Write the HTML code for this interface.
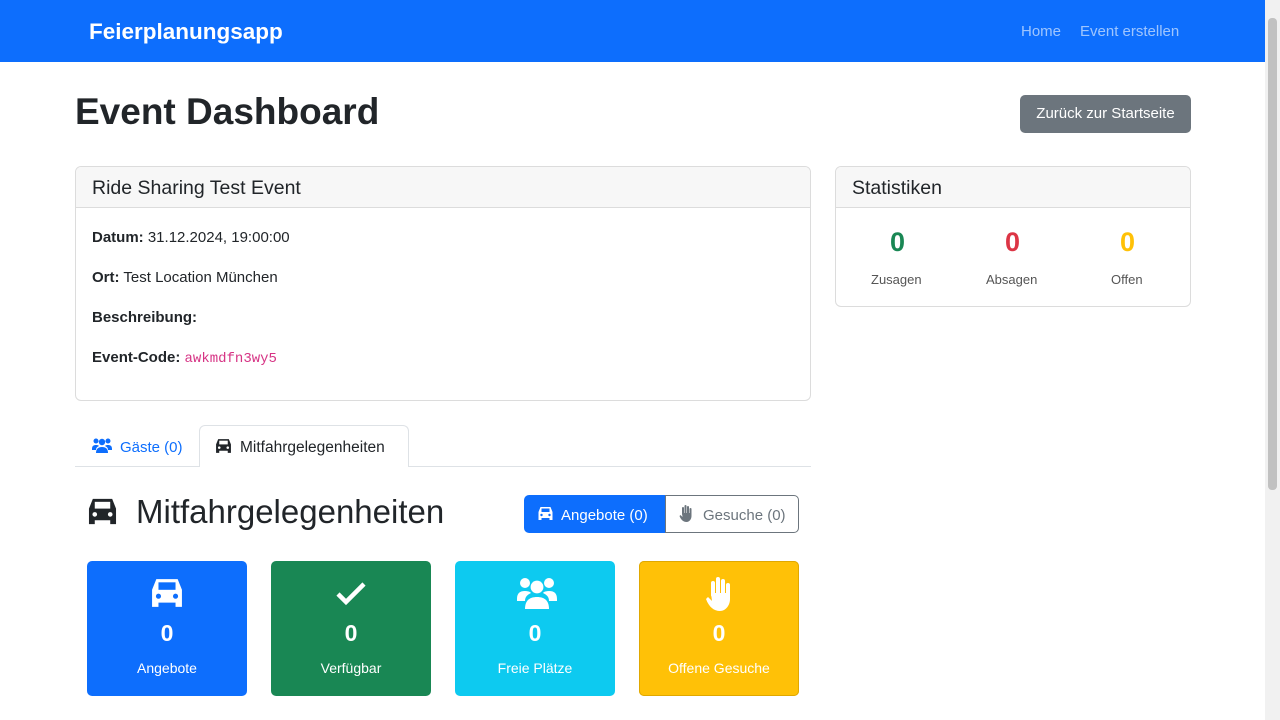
<!DOCTYPE html>
<html><head><meta charset="utf-8"><style>
*{box-sizing:border-box;margin:0;padding:0}
body{width:1280px;height:720px;overflow:hidden;background:#fff;font-family:"Liberation Sans",sans-serif;color:#212529;position:relative;font-size:15px}
.a{position:absolute}
.nav{left:0;top:0;width:1265px;height:62px;background:#0d6efd}
.sb{left:1265px;top:0;width:15px;height:720px;background:#f1f1f1}
.thumb{left:1268px;top:18px;width:9px;height:472px;background:#c1c1c1;border-radius:4px}
.card{border:1px solid #dcdcdc;border-radius:6px;background:#fff;overflow:hidden}
.ch{background:#f7f7f7;border-bottom:1px solid #dcdcdc;height:41px;padding:10px 16px;font-size:19.5px}
.tile{width:160px;height:135px;border-radius:5px;color:#fff;text-align:center}
.tile .n{position:absolute;left:0;right:0;top:59px;font-size:23px;font-weight:bold}
.tile .l{position:absolute;left:0;right:0;top:99px;font-size:14px}
.tile svg{position:absolute;left:62px;top:16px}
</style></head><body>
<div class="a nav"></div>
<div class="a" style="left:89px;top:19px;color:#fff;font-size:22.5px;font-weight:bold">Feierplanungsapp</div>
<div class="a" style="left:1021px;top:23px;color:rgba(255,255,255,.6);font-size:15px">Home</div>
<div class="a" style="left:1080px;top:23px;color:rgba(255,255,255,.6);font-size:15px">Event erstellen</div>
<div class="a sb"></div><div class="a thumb"></div>

<div class="a" style="left:75px;top:91px;font-size:37px;font-weight:bold">Event Dashboard</div>
<div class="a" style="left:1020px;top:95px;width:171px;height:38px;background:#6c757d;border-radius:5px;color:#fff;font-size:15px;line-height:38px;text-align:center">Zurück zur Startseite</div>

<div class="a card" style="left:75px;top:166px;width:736px;height:235px">
<div class="ch">Ride Sharing Test Event</div>
<div style="padding:20px 16px;line-height:20px">
<div><b>Datum:</b> 31.12.2024, 19:00:00</div>
<div style="margin-top:20px"><b>Ort:</b> Test Location München</div>
<div style="margin-top:20px"><b>Beschreibung:</b></div>
<div style="margin-top:20px"><b>Event-Code:</b> <span style="font-family:'Liberation Mono',monospace;color:#d63384;font-size:14px">awkmdfn3wy5</span></div>
</div></div>

<div class="a card" style="left:835px;top:166px;width:356px;height:141px">
<div class="ch">Statistiken</div></div>
<div class="a" style="left:835px;top:227px;width:356px;font-size:27px;font-weight:bold">
<span class="a" style="left:55px;color:#198754">0</span><span class="a" style="left:170px;color:#dc3545">0</span><span class="a" style="left:285px;color:#ffc107">0</span></div>
<div class="a" style="left:871px;top:272px;font-size:13px;color:#555">Zusagen</div>
<div class="a" style="left:986px;top:272px;font-size:13px;color:#555">Absagen</div>
<div class="a" style="left:1111px;top:272px;font-size:13px;color:#555">Offen</div>

<div class="a" style="left:75px;top:466px;width:736px;height:1px;background:#dee2e6"></div>
<div class="a" style="left:199px;top:425px;width:210px;height:42px;border:1px solid #dee2e6;border-bottom:none;border-radius:6px 6px 0 0;background:#fff"></div>
<svg class="a" style="left:92px;top:438px" width="20" height="16" viewBox="0 0 20 16" fill="#0d6efd"><circle cx="4" cy="3" r="2.5"/><circle cx="16" cy="3" r="2.5"/><circle cx="10" cy="4" r="3.2"/><path d="M0 11c0-3 1.5-4 4-4s3 1 3 1c-2 1-3 2-3 4H0zM20 11c0-3-1.5-4-4-4s-3 1-3 1c2 1 3 2 3 4h4zM4 15c0-4 2-6 6-6s6 2 6 6z"/></svg>
<div class="a" style="left:120px;top:439px;color:#0d6efd">Gäste (0)</div>
<svg class="a" style="left:215px;top:438px" width="17" height="16" viewBox="0 0 16 15" fill="#212529"><path d="M3 1h10l2 5v8h-3v-2H4v2H1V6z"/><rect x="4" y="2.5" width="8" height="3.5" fill="#fff"/><circle cx="4" cy="9" r="1.2" fill="#fff"/><circle cx="12" cy="9" r="1.2" fill="#fff"/></svg>
<div class="a" style="left:240px;top:439px;font-size:15.5px">Mitfahrgelegenheiten</div>

<svg class="a" style="left:86px;top:497px" width="33" height="29" viewBox="0 0 16 15" fill="#212529"><path d="M3 1h10l2 5v8h-3v-2H4v2H1V6z"/><rect x="4" y="2.5" width="8" height="3.5" fill="#fff"/><circle cx="4" cy="9" r="1.2" fill="#fff"/><circle cx="12" cy="9" r="1.2" fill="#fff"/></svg>
<div class="a" style="left:136px;top:493px;font-size:33px">Mitfahrgelegenheiten</div>

<div class="a" style="left:524px;top:495px;width:142px;height:38px;background:#0d6efd;border-radius:5px 0 0 5px"></div>
<div class="a" style="left:665px;top:495px;width:134px;height:38px;border:1px solid #6c757d;border-radius:0 5px 5px 0"></div>
<svg class="a" style="left:537px;top:506px" width="17" height="15" viewBox="0 0 16 15" fill="#fff"><path d="M3 1h10l2 5v8h-3v-2H4v2H1V6z"/><rect x="4" y="2.5" width="8" height="3.5" fill="#0d6efd"/><circle cx="4" cy="9" r="1.2" fill="#0d6efd"/><circle cx="12" cy="9" r="1.2" fill="#0d6efd"/></svg>
<div class="a" style="left:561px;top:507px;color:#fff">Angebote (0)</div>
<svg class="a" style="left:679px;top:505px" width="14" height="17" viewBox="0 0 14 17" fill="#6c757d"><rect x="3" y="2" width="2" height="8" rx="1"/><rect x="5.5" y="0" width="2" height="10" rx="1"/><rect x="8" y="1" width="2" height="9" rx="1"/><rect x="10.5" y="3" width="2" height="8" rx="1"/><path d="M3 8h9.5v3c0 3-2 6-5 6S2 15 0.5 11l1-1 2 2z"/></svg>
<div class="a" style="left:703px;top:507px;color:#6c757d">Gesuche (0)</div>

<div class="a tile" style="left:87px;top:561px;background:#0d6efd"><svg width="36" height="32" viewBox="0 0 16 15" fill="#fff"><path d="M3 1h10l2 5v8h-3v-2H4v2H1V6z"/><rect x="4" y="2.5" width="8" height="3.5" fill="#0d6efd"/><circle cx="4" cy="9" r="1.2" fill="#0d6efd"/><circle cx="12" cy="9" r="1.2" fill="#0d6efd"/></svg><div class="n">0</div><div class="l">Angebote</div></div>
<div class="a tile" style="left:271px;top:561px;background:#198754"><svg width="36" height="32" viewBox="0 0 36 32"><path d="M5 17l8 8L31 7" stroke="#fff" stroke-width="4.5" fill="none"/></svg><div class="n">0</div><div class="l">Verfügbar</div></div>
<div class="a tile" style="left:455px;top:561px;background:#0dcaf0"><svg width="40" height="32" viewBox="0 0 20 16" fill="#fff"><circle cx="4" cy="3" r="2.5"/><circle cx="16" cy="3" r="2.5"/><circle cx="10" cy="5" r="3.2"/><path d="M0 11c0-3 1.5-4 4-4s3 1 3 1c-2 1-3 2-3 4H0zM20 11c0-3-1.5-4-4-4s-3 1-3 1c2 1 3 2 3 4h4zM4 16c0-4 2-6 6-6s6 2 6 6z"/></svg><div class="n">0</div><div class="l">Freie Plätze</div></div>
<div class="a tile" style="left:639px;top:561px;background:#ffc107;box-shadow:inset 0 0 0 1px #e0a800"><svg width="36" height="34" viewBox="-2 0 18 17" fill="#fff"><rect x="3" y="2" width="2" height="8" rx="1"/><rect x="5.5" y="0" width="2" height="10" rx="1"/><rect x="8" y="1" width="2" height="9" rx="1"/><rect x="10.5" y="3" width="2" height="8" rx="1"/><path d="M3 8h9.5v3c0 3-2 6-5 6S2 15 0.5 11l1-1 2 2z"/></svg><div class="n">0</div><div class="l">Offene Gesuche</div></div>
</body></html>
